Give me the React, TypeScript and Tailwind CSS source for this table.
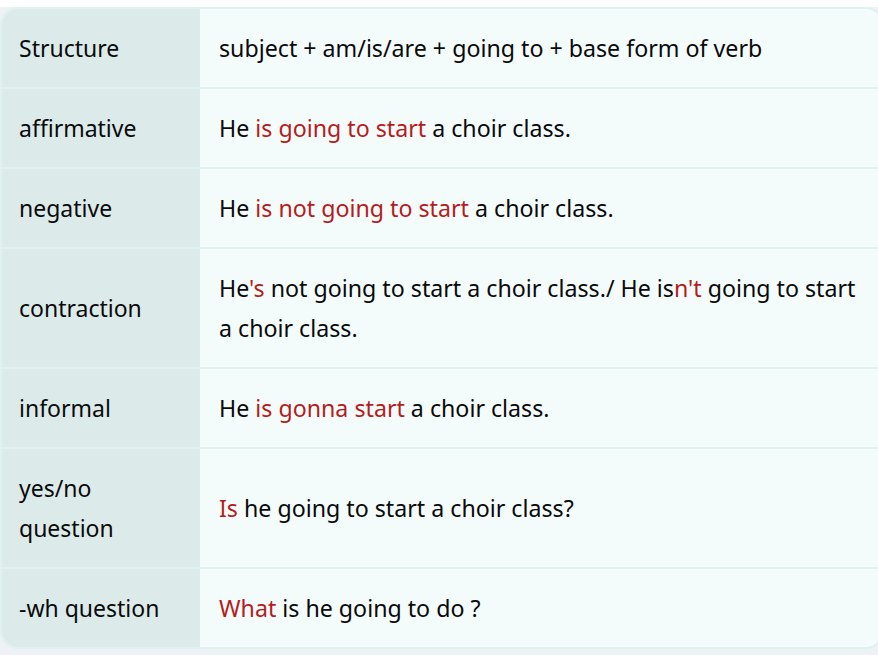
import React from "react";

const R = ({ children }: { children: React.ReactNode }) => (
  <span className="text-[#b71c1c]">{children}</span>
);

const rows: { label: React.ReactNode; content: React.ReactNode }[] = [
  { label: "Structure", content: "subject + am/is/are + going to + base form of verb" },
  { label: "affirmative", content: <>He <R>is going to start</R> a choir class.</> },
  { label: "negative", content: <>He <R>is not going to start</R> a choir class.</> },
  {
    label: "contraction",
    content: (
      <>
        He<R>'s</R> not going to start a choir class./ He is<R>n't</R> going to start a choir class.
      </>
    ),
  },
  { label: "informal", content: <>He <R>is gonna start</R> a choir class.</> },
  { label: <>yes/no<br />question</>, content: <><R>Is</R> he going to start a choir class?</> },
  { label: "-wh question", content: <><R>What</R> is he going to do ?</> },
];

export default function App() {
  return (
    <div
      className="min-h-[655px] w-[878px] overflow-hidden bg-[#eef1f6] text-[#0a0a0a]"
      style={{ fontFamily: '"Noto Sans", "Open Sans", sans-serif' }}
    >
      <div className="h-[7px] bg-white" />
      <div className="w-[884px] overflow-hidden rounded-[18px] border-2 border-[#dff2ef] bg-[#f4fbfb]">
        {rows.map((r, i) => (
          <div
            key={i}
            className={`flex ${i < rows.length - 1 ? "border-b-2 border-[#dff2ef]" : ""}`}
          >
            <div className="flex w-[198px] shrink-0 items-center bg-[#dcebea] py-[19px] pl-[17px] pr-3 text-[23px] leading-[40px]">
              <div>{r.label}</div>
            </div>
            <div className="flex flex-1 items-center py-[19px] pl-[19px] pr-[22px] text-[23.2px] leading-[40px]">
              <div>{r.content}</div>
            </div>
          </div>
        ))}
      </div>
    </div>
  );
}
